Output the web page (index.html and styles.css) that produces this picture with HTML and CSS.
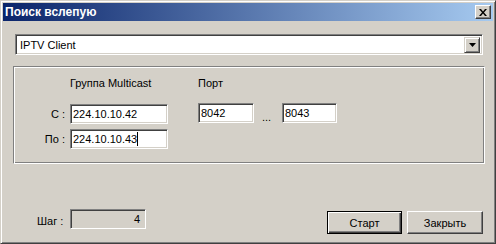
FILE: index.html
```html
<!DOCTYPE html>
<html lang="ru">

<head>
    <meta charset="UTF-8">
    <meta name="viewport" content="width=device-width, initial-scale=1.0">
    <title>Поиск вслепую</title>
    <link rel="stylesheet" href="styles.css">
</head>

<body>
    <div class="window">
        <div class="caption">
            <span class="caption-text">Поиск вслепую</span>
            <span class="close">
                <svg width="8" height="7" viewBox="0 0 8 7">
                    <path d="M0 0h2l2 2.5L6 0h2L5 3.5 8 7H6L4 4.5 2 7H0l3-3.5z" fill="#000"/>
                </svg>
            </span>
        </div>

        <div class="content">
            <div class="combo">
                <span class="combo-text">IPTV Client</span>
                <span class="combo-btn">
                    <svg width="7" height="4" viewBox="0 0 7 4"><path d="M0 0h7L3.5 4z" fill="#000"/></svg>
                </span>
            </div>

            <div class="group">
                <div class="grid">
                    <span></span>
                    <span class="head">Группа Multicast</span>
                    <span></span>
                    <span class="head">Порт</span>
                    <span></span>
                    <span></span>

                    <span class="lbl">С :</span>
                    <span class="field">224.10.10.42</span>
                    <span></span>
                    <span class="field up">8042</span>
                    <span class="dots">...</span>
                    <span class="field up">8043</span>

                    <span class="lbl">По :</span>
                    <span class="field">224.10.10.43<i class="caret"></i></span>
                </div>
            </div>

            <div class="bottom">
                <span class="step-lbl">Шаг :</span>
                <span class="field step">4</span>
                <div class="buttons">
                    <span class="btn default">Старт</span>
                    <span class="btn wide">Закрыть</span>
                </div>
            </div>
        </div>
    </div>
</body>

</html>
```

FILE: styles.css
```css
* {
    padding: 0;
    margin: 0;
    box-sizing: border-box;
}

body {
    width: 496px;
    height: 244px;
    background: #d4d0c8;
    font-family: "Liberation Sans", Arial, sans-serif;
    font-size: 11px;
    color: #000;
}

.window {
    width: 496px;
    height: 244px;
    border: 1px solid;
    border-color: #d4d0c8 #404040 #404040 #d4d0c8;
    box-shadow: inset 1px 1px #fff, inset -1px -1px #808080;
    padding: 2px;
    display: flex;
    flex-direction: column;
}

.caption {
    height: 18px;
    display: flex;
    align-items: center;
    justify-content: space-between;
    padding: 0 2px 0 2px;
    background: linear-gradient(to right, #0a246a, #a6caf0);
}

.caption-text {
    color: #fff;
    font-weight: bold;
    font-size: 12px;
}

.close {
    width: 16px;
    height: 14px;
    display: flex;
    align-items: center;
    justify-content: center;
    background: #d4d0c8;
    border: 1px solid;
    border-color: #fff #404040 #404040 #fff;
    box-shadow: inset -1px -1px #808080;
}

.content {
    flex: 1;
    padding: 13px 10px 0 12px;
}

.combo {
    height: 21px;
    display: flex;
    align-items: center;
    background: #fff;
    border: 1px solid;
    border-color: #808080 #fff #fff #808080;
    box-shadow: inset 1px 1px #404040, inset -1px -1px #d4d0c8;
    padding: 2px;
}

.combo-text {
    flex: 1;
    padding-left: 2px;
}

.combo-btn {
    width: 16px;
    height: 16px;
    display: flex;
    align-items: center;
    justify-content: center;
    background: #d4d0c8;
    border: 1px solid;
    border-color: #d4d0c8 #404040 #404040 #d4d0c8;
    box-shadow: inset 1px 1px #fff, inset -1px -1px #808080;
}

.group {
    margin: 11px 0 0 -2px;
    width: 472px;
    height: 98px;
    border: 1px solid;
    border-color: #808080 #fff #fff #808080;
    box-shadow: inset 1px 1px #fff, inset -1px -1px #808080;
    padding: 6px 0 0 1px;
}

.grid {
    display: grid;
    grid-template-columns: 55px 98px 30px 56px 28px 55px;
    grid-template-rows: auto 20px 20px;
    row-gap: 5px;
}

.head {
    height: 20px;
    line-height: 20px;
    margin-bottom: 6px;
}

.lbl {
    align-self: center;
    text-align: right;
    padding-right: 5px;
}

.field {
    display: flex;
    align-items: center;
    height: 20px;
    padding-left: 2px;
    background: #fff;
    border: 1px solid;
    border-color: #808080 #fff #fff #808080;
    box-shadow: inset 1px 1px #404040, inset -1px -1px #d4d0c8;
}

.up {
    margin-top: -1px;
}

.caret {
    display: inline-block;
    width: 1px;
    height: 14px;
    background: #000;
}

.dots {
    align-self: end;
    padding-left: 8px;
    line-height: 14px;
}

.bottom {
    margin-top: 45px;
    display: flex;
    align-items: flex-start;
    margin-left: -12px;
    padding-left: 34px;
}

.step-lbl {
    width: 33px;
    height: 20px;
    line-height: 24px;
}

.step {
    width: 76px;
    justify-content: flex-end;
    padding-right: 5px;
    background: #d4d0c8;
}

.buttons {
    margin-left: auto;
    margin-top: 2px;
    display: flex;
    gap: 5px;
}

.btn {
    width: 75px;
    height: 23px;
    display: flex;
    align-items: center;
    justify-content: center;
    border: 1px solid;
    border-color: #fff #404040 #404040 #fff;
    box-shadow: inset -1px -1px #808080;
}

.btn.wide {
    width: 76px;
}

.btn.default {
    border-color: #000;
    box-shadow: inset 1px 1px #fff, inset -1px -1px #404040, inset -2px -2px #808080;
}
```
